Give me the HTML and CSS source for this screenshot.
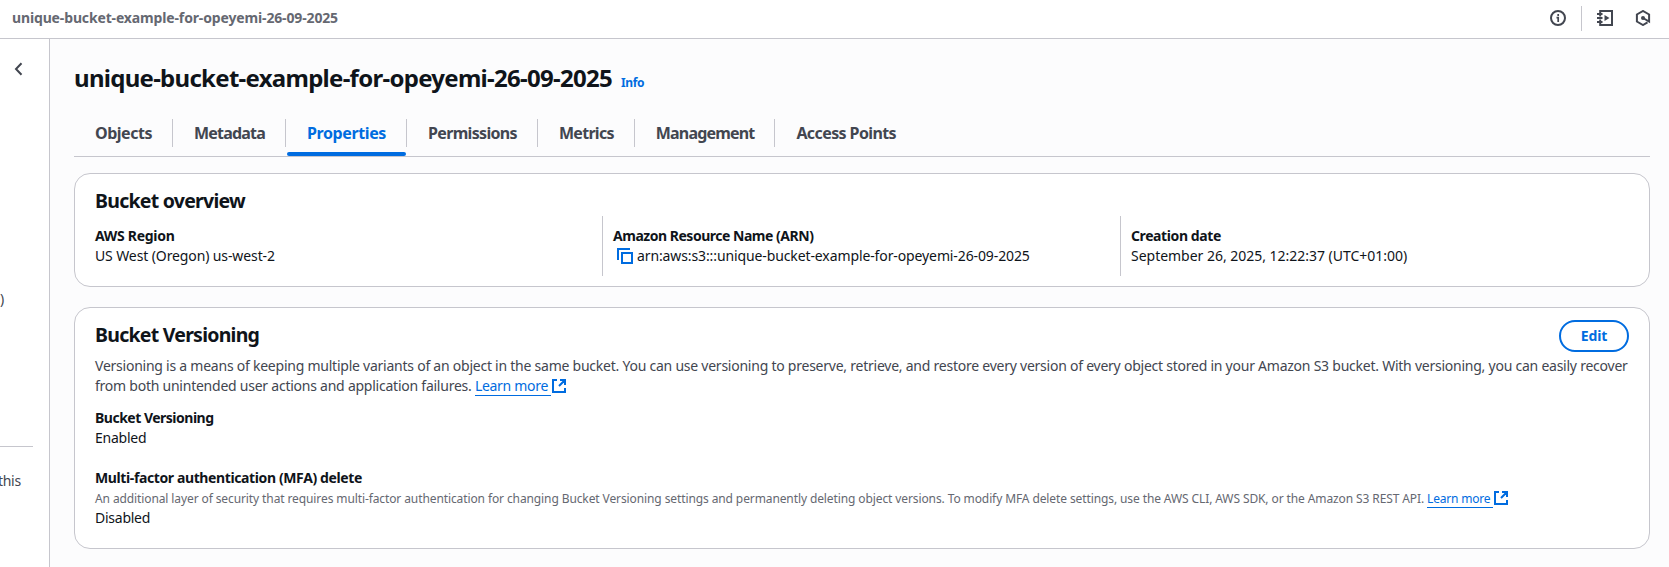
FILE: index.html
```html
<!DOCTYPE html>
<html lang="en">
<head>
<meta charset="utf-8">
<title>unique-bucket-example-for-opeyemi-26-09-2025</title>
<link rel="stylesheet" href="styles.css">
</head>
<body>
<header class="topbar">
  <span class="crumb">unique-bucket-example-for-opeyemi-26-09-2025</span>
  <div class="tools">
    <svg class="tool" viewBox="0 0 16 16"><circle cx="8" cy="8" r="7"/><path class="info-i" d="M8.200 12V7.700H6.500M8.200 4v2"/></svg>
    <span class="tool-sep"></span>
    <svg class="tool tool-book" viewBox="0 0 16 16"><path d="M3.200 3V1H15v14H3.200v-2M3.200 5v1.500M3.200 9.500V11M0 4h5.500M0 8h5.500M0 12h5.500"/><path class="solid" d="M7.500 5l5 3-5 3z"/></svg>
    <svg class="tool" viewBox="0 0 16 16"><path d="M12.500 12.400L8 15 1.900 11.500V4.500L8 1l6.100 3.500v7L8 8"/><circle class="solid" cx="8" cy="8" r="2"/></svg>
  </div>
</header>
<div class="shell">
  <aside class="side">
    <svg class="chevron" viewBox="0 0 9 14"><path d="M7.500 1.200L2 7l5.500 5.800"/></svg>
    <span class="side-paren">)</span>
    <span class="side-rule"></span>
    <span class="side-text">this</span>
  </aside>
  <main class="main">
    <div class="title-row">
      <h1 class="title">unique-bucket-example-for-opeyemi-26-09-2025</h1>
      <a class="info">Info</a>
    </div>
    <nav class="tabs">
      <a class="tab objects">Objects</a>
      <a class="tab metadata">Metadata</a>
      <a class="tab properties active">Properties</a>
      <a class="tab permissions">Permissions</a>
      <a class="tab metrics">Metrics</a>
      <a class="tab management">Management</a>
      <a class="tab access">Access Points</a>
    </nav>
    <section class="card overview">
      <h2 class="card-title">Bucket overview</h2>
      <div class="columns">
        <div class="col">
          <div class="label region">AWS Region</div>
          <div class="value">US West (Oregon) us-west-2</div>
        </div>
        <div class="col">
          <div class="label">Amazon Resource Name (ARN)</div>
          <div class="value arn"><svg class="copy" viewBox="0 0 16 16"><path d="M1 12V1h12M5 5h10v10H5z"/></svg><span>arn:aws:s3:::unique-bucket-example-for-opeyemi-26-09-2025</span></div>
        </div>
        <div class="col">
          <div class="label created">Creation date</div>
          <div class="value date">September 26, 2025, 12:22:37 (UTC+01:00)</div>
        </div>
      </div>
    </section>
    <section class="card versioning">
      <div class="card-head">
        <h2 class="card-title">Bucket Versioning</h2>
        <button class="edit">Edit</button>
      </div>
      <p class="desc">Versioning is a means of keeping multiple variants of an object in the same bucket. You can use versioning to preserve, retrieve, and restore every version of every object stored in your Amazon S3 bucket. With versioning, you can easily recover<br>from both unintended user actions and application failures. <a class="link">Learn more</a><svg class="ext" viewBox="0 0 14 14"><path d="M5 1H1v12h12V9M8 1h5v5M13 1L7 7"/></svg></p>
      <div class="label status">Bucket Versioning</div>
      <div class="value state">Enabled</div>
      <div class="label mfa">Multi-factor authentication (MFA) delete</div>
      <p class="hint">An additional layer of security that requires multi-factor authentication for changing Bucket Versioning settings and permanently deleting object versions. To modify MFA delete settings, use the AWS CLI, AWS SDK, or the Amazon S3 REST API. <a class="link">Learn more</a><svg class="ext" viewBox="0 0 14 14"><path d="M5 1H1v12h12V9M8 1h5v5M13 1L7 7"/></svg></p>
      <div class="value state">Disabled</div>
    </section>
  </main>
</div>
</body>
</html>
```
FILE: styles.css
```css
* { box-sizing: border-box; margin: 0; padding: 0; }
body {
  width: 1669px; height: 567px; overflow: hidden;
  font-family: "Noto Sans", "Open Sans", sans-serif;
  font-size: 14px; line-height: 20px; color: #0f141a; background: #fff;
  display: flex; flex-direction: column; white-space: nowrap;
}
svg { fill: none; stroke: currentColor; stroke-width: 2; display: block; flex: none; }
.topbar {
  height: 39px; flex: none; border-bottom: 1px solid #c6c6cd;
  display: flex; justify-content: space-between; align-items: center;
  padding: 0 18px 2px 12px; color: #656871;
}
.crumb { font-weight: 700; letter-spacing: -0.143px; }
.tools { display: flex; align-items: center; color: #424650; }
.tool { width: 16px; height: 16px; }
.info-i { stroke-width: 1.7; }
.solid { fill: currentColor; stroke: none; }
.tool-sep { width: 1px; height: 25px; background: #c6c6cd; margin: 0 15px; }
.tool-book { margin-right: 22px; }
.shell { flex: 1; display: flex; min-height: 0; }
.side {
  width: 50px; flex: none; border-right: 1px solid #c6c6cd; color: #424650;
  display: flex; flex-direction: column; align-items: flex-start;
}
.chevron { width: 9px; height: 14px; margin: 23px 0 0 14px; }
.side-paren { margin-top: 213px; }
.side-rule { width: 33px; height: 1px; background: #c6c6cd; margin-top: 137px; }
.side-text { margin-top: 24px; margin-left: -2px; letter-spacing: -0.3px; }
.main { flex: 1; min-width: 0; background: #fcfcfd; padding: 24px 19px 0 24px; }
.title-row { display: flex; align-items: baseline; gap: 9px; height: 30px; }
.title { font-size: 24px; line-height: 30px; font-weight: 700; letter-spacing: -0.719px; }
.info { font-size: 12px; font-weight: 700; color: #006ce0; letter-spacing: -0.4px; }
.tabs { display: flex; height: 64px; padding-top: 26px; border-bottom: 1px solid #c6c6cd; }
.tab {
  height: 28px; padding: 0 20px 0 21px; border-right: 1px solid #c6c6cd;
  font-size: 16px; font-weight: 700; line-height: 28px; color: #424650; position: relative;
}
.tab:last-child { border: 0; }
.objects { letter-spacing: -0.475px; }
.metadata { letter-spacing: -0.8px; }
.properties { letter-spacing: -0.391px; }
.permissions { letter-spacing: -0.67px; }
.metrics { letter-spacing: -0.7px; }
.management { letter-spacing: -0.83px; }
.access { letter-spacing: -0.6px; }
.active { color: #006ce0; }
.active::after {
  content: ""; position: absolute; left: 1px; right: 0; bottom: -9px; height: 4px;
  background: #006ce0; border-radius: 2px;
}
.card { background: #fff; border: 1px solid #c6c6cd; border-radius: 16px; padding: 0 20px; margin-top: 16px; }
.card-title { font-size: 19.5px; line-height: 24px; font-weight: 700; letter-spacing: -0.75px; }
.overview { height: 114px; padding-top: 15px; }
.columns { display: grid; grid-template-columns: repeat(3, 1fr); column-gap: 20px; margin-top: 3px; }
.col { height: 60px; padding-top: 10px; }
.col + .col { border-left: 1px solid #c6c6cd; margin-left: -11px; padding-left: 10px; }
.label { font-weight: 700; letter-spacing: -0.48px; }
.region { letter-spacing: -0.3px; }
.created { letter-spacing: -0.4px; }
.value { letter-spacing: -0.11px; }
.date { letter-spacing: -0.02px; }
.state { letter-spacing: -0.25px; }
.arn { display: flex; align-items: center; padding-left: 4px; }
.copy { width: 16px; height: 16px; margin-right: 4px; color: #006ce0; }
.versioning { height: 242px; margin-top: 20px; padding-top: 12px; }
.card-head { display: flex; justify-content: space-between; height: 36px; }
.versioning .card-title { margin-top: 3px; }
.edit {
  width: 70px; height: 32px; border: 2px solid #006ce0; border-radius: 20px; background: #fff;
  color: #006ce0; font: 700 14px/20px "Noto Sans", sans-serif; letter-spacing: -0.1px;
}
.desc { color: #424650; margin-bottom: 12px; letter-spacing: -0.24px; }
.status { letter-spacing: -0.5px; }
.hint { font-size: 12px; line-height: 20px; color: #656871; letter-spacing: -0.105px; padding-top: 1px; margin-bottom: -1px; }
.link { color: #006ce0; border-bottom: 1px solid #006ce0; padding-right: 3px; letter-spacing: -0.31px; }
.hint .link { letter-spacing: -0.2px; }
.ext { width: 14px; height: 14px; display: inline-block; color: #006ce0; vertical-align: -2px; margin-left: 1px; }
.mfa { margin-top: 20px; letter-spacing: -0.385px; }
```
